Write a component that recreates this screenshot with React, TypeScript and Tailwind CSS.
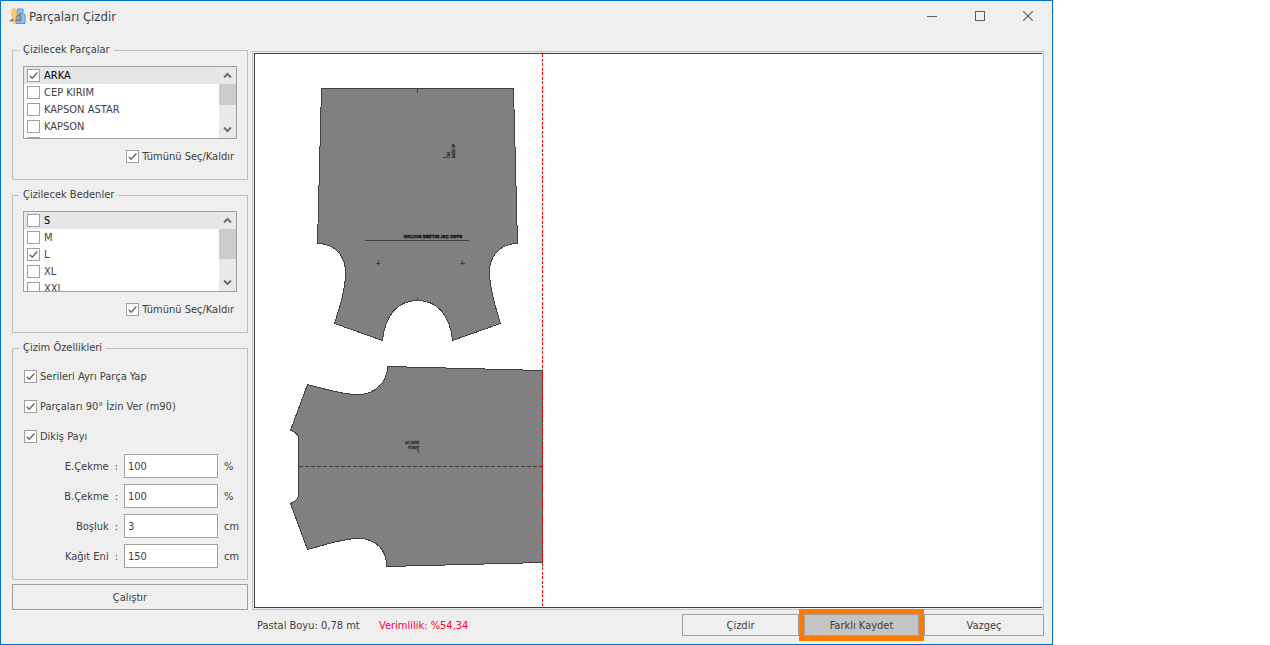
import React, { useState } from 'react';

interface CheckItem {
  name: string;
  checked: boolean;
}

interface CheckBoxProps {
  checked: boolean;
  onChange: () => void;
  children?: React.ReactNode;
}

const CheckBox: React.FC<CheckBoxProps> = ({ checked, onChange, children }) => (
  <label className="flex items-center gap-[3px] whitespace-nowrap">
    <span className="grid h-[13px] w-[13px] shrink-0">
      <input
        type="checkbox"
        checked={checked}
        onChange={onChange}
        className="col-start-1 row-start-1 h-[13px] w-[13px] appearance-none border border-[#a0a0a0] bg-white"
      />
      {checked && (
        <svg viewBox="0 0 13 13" className="pointer-events-none col-start-1 row-start-1 h-[13px] w-[13px]" fill="none">
          <path d="M2.8 6.8 L5.2 9.2 L10.4 3.6" stroke="#666666" strokeWidth="1.4" />
        </svg>
      )}
    </span>
    <span>{children}</span>
  </label>
);

interface CheckListProps {
  items: CheckItem[];
  onToggle: (index: number) => void;
  heightClass: string;
  thumbClass: string;
}

const CheckList: React.FC<CheckListProps> = ({ items, onToggle, heightClass, thumbClass }) => (
  <div className={`flex border border-[#a0a0a0] bg-white ${heightClass}`}>
    <ul className="min-w-0 flex-1 overflow-hidden leading-[17px]">
      {items.map((item, i) => (
        <li key={i} className={`flex h-[17px] items-center pl-[3px] ${i === 0 ? 'bg-[#e6e6e6] text-black' : ''}`}>
          <CheckBox checked={item.checked} onChange={() => onToggle(i)}>
            <span className="block pt-px pl-px leading-4">{item.name}</span>
          </CheckBox>
        </li>
      ))}
    </ul>
    <div className="flex w-[17px] flex-col bg-[#e9e9e9]">
      <button type="button" aria-label="Yukarı" className="flex h-[17px] shrink-0 items-center justify-center">
        <svg width="9" height="7" viewBox="0 0 9 7" fill="none">
          <path d="M1 5.5 L4.5 2 L8 5.5" stroke="#707070" strokeWidth="2" />
        </svg>
      </button>
      <div className={`shrink-0 bg-[#cbcbcb] ${thumbClass}`} />
      <button type="button" aria-label="Aşağı" className="mt-auto flex h-[17px] shrink-0 items-center justify-center">
        <svg width="9" height="7" viewBox="0 0 9 7" fill="none">
          <path d="M1 1.5 L4.5 5 L8 1.5" stroke="#707070" strokeWidth="2" />
        </svg>
      </button>
    </div>
  </div>
);

interface GroupProps {
  title: string;
  className: string;
  children: React.ReactNode;
}

const Group: React.FC<GroupProps> = ({ title, className, children }) => (
  <fieldset className={`min-w-0 border border-[#bfbfbf] px-[10px] pt-2 ${className}`}>
    <legend className="-ml-1 px-1 pb-[2px] leading-[13px]">{title}</legend>
    {children}
  </fieldset>
);

interface FieldProps {
  id: string;
  label: string;
  unit: string;
  value: string;
}

const Field: React.FC<FieldProps> = ({ id, label, unit, value }) => (
  <div className="flex h-6 items-center">
    <label htmlFor={id} className="flex w-[101px] shrink-0 justify-end gap-[6px] pr-[6px]">
      <span>{label}</span>
      <span>:</span>
    </label>
    <input id={id} defaultValue={value} className="h-6 w-[94px] shrink-0 border border-[#a0a0a0] bg-white px-[3px]" />
    <span className="pl-[6px]">{unit}</span>
  </div>
);

const AppIcon = () => (
  <svg width="17" height="17" viewBox="0 0 17 17">
    <path d="M8.5 1 H14 V4.5 L16 7 V15.5 H7 V9 Z" fill="#8cc4ee" stroke="#4b9bd8" strokeWidth="1" />
    <path d="M0.5 12.5 L12.5 4 V13.5 H0.5 Z M7 11 H10.5 V8 Z" fill="#858585" fillRule="evenodd" />
    <path d="M3 1.5 L5 0.5 L7 1.5 L8 7 L6.3 11 L6 15.5 H5 L4.5 11 L2.5 7 Z" fill="#fbc878" stroke="#e8ae62" strokeWidth="0.6" />
  </svg>
);

const PatternView = () => (
  <svg width="787" height="553" viewBox="255 54 787 553" className="block" shapeRendering="crispEdges">
    <g fill="#808080" stroke="#404040" strokeWidth="1">
      <path d="M321.5 88.5 H513.5 L517.5 243.5 C500 243.5 489.5 256 489.5 272.5 C489.5 286 494 303 500.5 323.5 L452.5 340.5 C450 316 438 300.5 417.5 300.5 C397 300.5 385 316 382.5 340.5 L334.5 323.5 C341 303 345.5 288 345.5 272.5 C345.5 256 335 243.5 317.5 243.5 Z" />
      <path d="M307.5 384.5 C325 389 341 394.5 358.5 394.5 C375 394.5 387.5 382 387.5 366.5 L542.5 370.5 V562.5 L386.5 566.5 C387 550 376 538.5 358.5 538.5 C341 538.5 325 545 307.5 549.5 L290.5 503.5 C296 501 298.5 499 298.5 495 V438 C298.5 434 295 432 290.5 430.5 Z" />
    </g>
    <g stroke="#404040" strokeWidth="1" fill="none">
      <path d="M417.5 89 V93 M417.5 297 V301 M365 240.5 H469" />
      <path d="M376 263.5 H380 M378.5 261 V265 M460 263.5 H465 M462.5 261 V265" />
      <path d="M299 466.5 H542" strokeDasharray="4 2" />
    </g>
    <g fill="#303030" stroke="#303030" strokeWidth="0.3" fontFamily="Liberation Sans, sans-serif" fontSize="4">
      <g transform="translate(446 158) rotate(-90)">
        <text x="0" y="0">L</text>
        <text x="0" y="4">ÖN</text>
        <text x="0" y="9" fontSize="3">BASIC UP</text>
      </g>
      <g transform="translate(419 450) rotate(180)">
        <text x="0" y="0">L</text>
        <text x="0" y="4">ARKA</text>
        <text x="0" y="9" fontSize="3">BASIC UP</text>
      </g>
      <text transform="translate(462 235) rotate(180)" fontWeight="bold" fill="#101010" stroke="#101010">
        BASIC ÜST EKLEME NOKTASI
      </text>
    </g>
    <path d="M542.5 54 V607" stroke="#ff0000" strokeWidth="1" strokeDasharray="3 1.5" />
  </svg>
);

export default function App() {
  const [parts, setParts] = useState<CheckItem[]>([
    { name: 'ARKA', checked: true },
    { name: 'CEP KIRIM', checked: false },
    { name: 'KAPSON ASTAR', checked: false },
    { name: 'KAPSON', checked: false },
    { name: '', checked: false },
  ]);
  const [sizes, setSizes] = useState<CheckItem[]>([
    { name: 'S', checked: false },
    { name: 'M', checked: false },
    { name: 'L', checked: true },
    { name: 'XL', checked: false },
    { name: 'XXL', checked: false },
  ]);
  const [flags, setFlags] = useState({ allParts: true, allSizes: true, series: true, rotate: true, seam: true });

  const toggleAt = (list: CheckItem[], index: number) =>
    list.map((item, i) => (i === index ? { ...item, checked: !item.checked } : item));
  const flip = (key: keyof typeof flags) => setFlags({ ...flags, [key]: !flags[key] });

  return (
    <div className="min-h-screen bg-white font-['DejaVu_Sans_Condensed','DejaVu_Sans',sans-serif] text-[11px] leading-[15px] text-[#404040]">
      <div className="flex min-h-screen w-full max-w-[1053px] flex-col border border-[#0072c6] bg-[#efefef]">
        {/* Title bar */}
        <header className="flex h-[30px] items-center pl-2">
          <AppIcon />
          <h1 className="pl-[3px] text-[13px]">Parçaları Çizdir</h1>
          <div className="ml-auto flex">
            <button type="button" aria-label="Simge durumuna küçült" className="flex h-7 w-12 items-center justify-center">
              <svg width="10" height="10" viewBox="0 0 10 10" fill="none" shapeRendering="crispEdges">
                <path d="M0 5.5 H10" stroke="#606060" />
              </svg>
            </button>
            <button type="button" aria-label="Ekranı kapla" className="flex h-7 w-12 items-center justify-center">
              <svg width="10" height="10" viewBox="0 0 10 10" fill="none" shapeRendering="crispEdges">
                <path d="M0.5 0.5 H9.5 V9.5 H0.5 Z" stroke="#606060" />
              </svg>
            </button>
            <button type="button" aria-label="Kapat" className="flex h-7 w-12 items-center justify-center">
              <svg width="10" height="10" viewBox="0 0 10 10" fill="none">
                <path d="M0 0 L10 10 M10 0 L0 10" stroke="#606060" strokeWidth="1.2" />
              </svg>
            </button>
          </div>
        </header>

        <main className="flex flex-1 gap-1 pt-3 pr-2 pl-[11px]">
          {/* Options */}
          <aside className="flex w-[236px] shrink-0 flex-col gap-2">
            <Group title="Çizilecek Parçalar" className="pb-[14px]">
              <CheckList
                items={parts}
                onToggle={(i) => setParts(toggleAt(parts, i))}
                heightClass="h-[73px]"
                thumbClass="h-[21px]"
              />
              <div className="mt-[9px] flex h-[17px] items-center justify-end pr-[3px]">
                <CheckBox checked={flags.allParts} onChange={() => flip('allParts')}>
                  Tümünü Seç/Kaldır
                </CheckBox>
              </div>
            </Group>

            <Group title="Çizilecek Bedenler" className="pb-[14px]">
              <CheckList
                items={sizes}
                onToggle={(i) => setSizes(toggleAt(sizes, i))}
                heightClass="h-[81px]"
                thumbClass="h-[30px]"
              />
              <div className="mt-[9px] flex h-[17px] items-center justify-end pr-[3px]">
                <CheckBox checked={flags.allSizes} onChange={() => flip('allSizes')}>
                  Tümünü Seç/Kaldır
                </CheckBox>
              </div>
            </Group>

            <div className="flex flex-col gap-1">
              <Group title="Çizim Özellikleri" className="pb-[11px]">
                <div className="flex flex-col gap-[6px]">
                  <div className="flex h-6 items-center pl-px">
                    <CheckBox checked={flags.series} onChange={() => flip('series')}>
                      Serileri Ayrı Parça Yap
                    </CheckBox>
                  </div>
                  <div className="flex h-6 items-center pl-px">
                    <CheckBox checked={flags.rotate} onChange={() => flip('rotate')}>
                      Parçaları 90° İzin Ver (m90)
                    </CheckBox>
                  </div>
                  <div className="flex h-6 items-center pl-px">
                    <CheckBox checked={flags.seam} onChange={() => flip('seam')}>
                      Dikiş Payı
                    </CheckBox>
                  </div>
                  <Field id="e-cekme" label="E.Çekme" unit="%" value="100" />
                  <Field id="b-cekme" label="B.Çekme" unit="%" value="100" />
                  <Field id="bosluk" label="Boşluk" unit="cm" value="3" />
                  <Field id="kagit-eni" label="Kağıt Eni" unit="cm" value="150" />
                </div>
              </Group>
              <button type="button" className="h-[26px] border border-[#a0a0a0]">
                Çalıştır
              </button>
            </div>
          </aside>

          {/* Drawing area */}
          <section className="mt-2 flex min-w-0 flex-1 border border-[#bfbfbf] p-px">
            <div className="min-w-0 flex-1 overflow-hidden border-y border-l border-[#404040] bg-white">
              <PatternView />
            </div>
          </section>
        </main>

        <footer className="flex items-center pt-1 pr-2 pb-2 pl-64">
          <span className="w-[122px]">Pastal Boyu: 0,78 mt</span>
          <span className="text-[#ff0033]">Verimlilik: %54,34</span>
          <div className="ml-auto flex gap-[5px]">
            <button type="button" className="h-[22px] w-[117px] border border-[#a0a0a0]">
              Çizdir
            </button>
            <button
              type="button"
              className="h-[22px] w-[115px] border border-[#a0a0a0] bg-[#c4c4c4] outline-5 outline-[#ff7a00]"
            >
              Farklı Kaydet
            </button>
            <button type="button" className="h-[22px] w-[120px] border border-[#a0a0a0]">
              Vazgeç
            </button>
          </div>
        </footer>
      </div>
    </div>
  );
}
